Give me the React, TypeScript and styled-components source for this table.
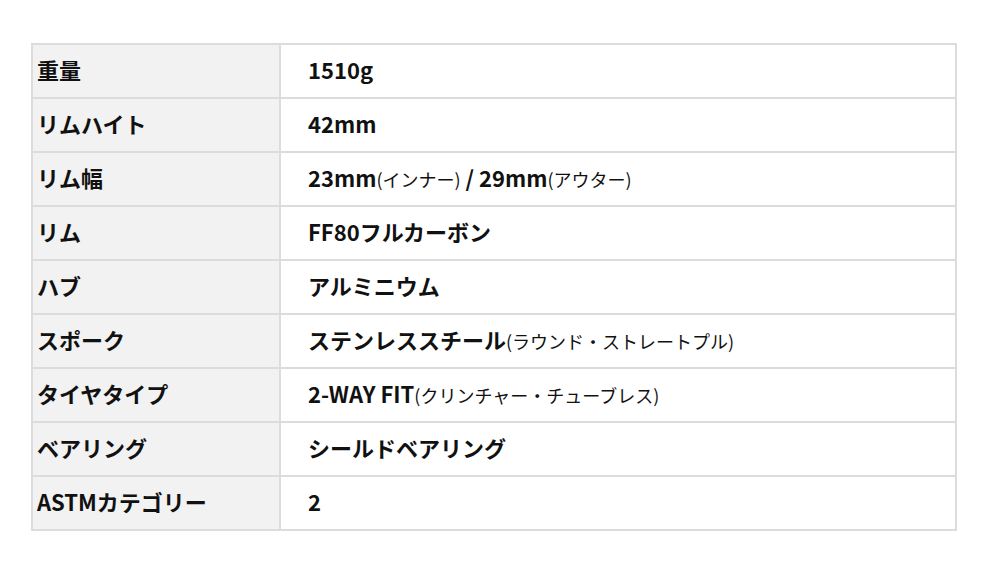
import React from "react";
import styled, { createGlobalStyle } from "styled-components";

const Global = createGlobalStyle`
  html, body { margin: 0; padding: 0; background: #fff; }
  body { font-family: "Noto Sans CJK JP", "Noto Sans", sans-serif; color: #111; }
`;

const Page = styled.div`
  padding: 43px 30px 0 31px;
`;

const Table = styled.table`
  width: 926px;
  border-collapse: collapse;
  border: 2px solid #dcdcdc;
  table-layout: fixed;
`;

const Row = styled.tr`
  height: 54px;
`;

const Label = styled.th`
  width: 238px;
  background: #f2f2f2;
  border: 2px solid #dcdcdc;
  padding: 0 4px 4px;
  text-align: left;
  font-size: 22px;
  font-weight: 700;
  vertical-align: middle;
  white-space: nowrap;
`;

const Value = styled.td`
  border: 2px solid #dcdcdc;
  padding: 0 0 4px 27px;
  font-size: 22px;
  font-weight: 700;
  vertical-align: middle;
  white-space: nowrap;
`;

const Note = styled.span`
  font-size: 18px;
  font-weight: 400;
`;

const rows: [string, React.ReactNode][] = [
  ["重量", "1510g"],
  ["リムハイト", "42mm"],
  [
    "リム幅",
    <>
      23mm<Note>(インナー)</Note> / 29mm<Note>(アウター)</Note>
    </>,
  ],
  ["リム", "FF80フルカーボン"],
  ["ハブ", "アルミニウム"],
  [
    "スポーク",
    <>
      ステンレススチール<Note>(ラウンド・ストレートプル)</Note>
    </>,
  ],
  [
    "タイヤタイプ",
    <>
      2-WAY FIT<Note>(クリンチャー・チューブレス)</Note>
    </>,
  ],
  ["ベアリング", "シールドベアリング"],
  ["ASTMカテゴリー", "2"],
];

export default function App() {
  return (
    <Page>
      <Global />
      <Table>
        <tbody>
          {rows.map(([k, v]) => (
            <Row key={k}>
              <Label>{k}</Label>
              <Value>{v}</Value>
            </Row>
          ))}
        </tbody>
      </Table>
    </Page>
  );
}
